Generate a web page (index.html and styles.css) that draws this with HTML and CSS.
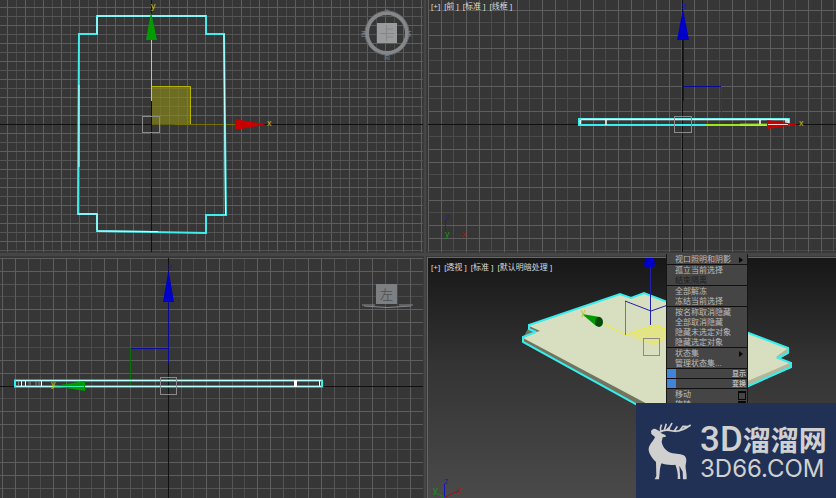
FILE: index.html
```html
<!DOCTYPE html>
<html lang="zh-CN">
<head>
<meta charset="utf-8">
<title>3D 视口</title>
<link rel="stylesheet" href="styles.css">
</head>
<body>
<main class="workspace">
  <section class="viewport" aria-label="顶视图">
    <svg class="scene" viewBox="0 0 423 252" preserveAspectRatio="xMinYMin slice">
      <defs>
        <pattern id="gridTop" x="7" y="7" width="18" height="18" patternUnits="userSpaceOnUse">
          <path class="line-dim" d="M9 0h1v18h-1z"/>
          <path class="line" d="M0 0h1v18h-1zM0 0h18v1h-18z"/>
          <path class="line-mid" d="M0 9h18v1h-18z"/>
        </pattern>
      </defs>
      <rect width="423" height="252" fill="url(#gridTop)"/>
      <path class="axis" d="M0 124.500H423M151.500 0V252"/>
      <rect x="152" y="86" width="39" height="39" fill="#8b8b1a" fill-opacity=".65"/>
      <path d="M152 86.500H190.500V124" fill="none" stroke="#b9b400"/>
      <path d="M175 124.500H236" stroke="#767000"/>
      <path d="M151.500 40V101" stroke="#d8d21c"/>
      <path class="outline" d="M97 16H206V34H224L226 215H206V233L97 231V214H78L79 34H97Z"/>
      <path class="outline-core" d="M97 16H206M97 34V17M79 85V167M224 34L225.500 215M97 231L158 231.500M78 214H97V230"/>
      <path fill="#009c00" d="M151 12L157 40H146Z"/>
      <path fill="#c80000" d="M235 119L266 124.500L235 130Z"/>
      <rect class="pivot" x="142.500" y="116.500" width="17" height="16"/>
      <text class="tick" x="151" y="9" fill="#c5c01a">y</text>
      <text class="tick" x="267" y="126" fill="#c5c01a">x</text>
      <circle cx="387" cy="33" r="20" fill="none" stroke="#85888b" stroke-width="4"/>
      <circle cx="387" cy="33" r="22" fill="none" stroke="#686a6c"/>
      <rect x="377" y="23" width="20" height="20" fill="#999b9d"/>
      <path d="M380 33.500H394M386.500 25V41M387 29h6M387 37h6" stroke="#85878a" fill="none"/>
      <g class="compass"><text x="384" y="14">北</text><text x="384" y="59">南</text><text x="361" y="36">西</text><text x="406" y="36">东</text></g>
    </svg>
  </section>

  <section class="viewport" aria-label="前视图">
    <svg class="scene" viewBox="427 0 409 252" preserveAspectRatio="xMinYMin slice">
      <defs>
        <pattern id="gridFront" x="441" y="10" width="38" height="38" patternUnits="userSpaceOnUse">
          <path class="line-dim" d="M12 0h1v38h-1zM0 12h38v1h-38z"/>
          <path class="line" d="M0 0h1v38h-1zM25 0h1v38h-1zM0 0h38v1h-38zM0 25h38v1h-38z"/>
        </pattern>
      </defs>
      <rect x="428" width="408" height="252" fill="url(#gridFront)"/>
      <path class="axis" d="M428 124.500H836M682.500 0V252"/>
      <path d="M683.500 38V101M683 86.500H721" stroke="#0a0a9a" fill="none"/>
      <path d="M721.500 87V124" stroke="#a01010"/>
      <rect x="579" y="119" width="210" height="6" fill="none" stroke="#38eef2" stroke-width="2"/>
      <path d="M581 119.500H788M580.500 120V124M606 119V125M760 119V125M786 120v3M740 124.500H788V119" stroke="#fff" fill="none" stroke-width="1.500"/>
      <path d="M706 124.500H768" stroke="#9ee81e"/>
      <path fill="#c80000" d="M767 120L798 124.500L767 129Z"/>
      <path d="M768 124.500H788" stroke="#ffd0d0"/>
      <path fill="#0000c8" d="M683 9L689 40H677Z"/>
      <rect class="pivot" x="674.500" y="116.500" width="17" height="16"/>
      <text class="tick" x="682" y="9" fill="#1c1cc0">z</text>
      <text class="tick" x="799" y="126" fill="#c5c01a">x</text>
      <path d="M445.500 220V235" stroke="#1c1cb5"/><path d="M448 235.500H463" stroke="#9a1010"/>
      <text class="tick" x="445" y="220" fill="#1c1cc0">z</text>
      <text class="tick" x="445" y="237" fill="#159a15">y</text>
      <text class="tick" x="462" y="237" fill="#aa1515">x</text>
    </svg>
    <div class="labels">
      <button type="button">[+]</button><button type="button">[前 ]</button><button type="button">[标准 ]</button><button type="button">[线框 ]</button>
    </div>
  </section>

  <section class="viewport" aria-label="左视图">
    <svg class="scene" viewBox="0 257 423 241" preserveAspectRatio="xMinYMin slice">
      <defs>
        <pattern id="gridLeft" x="15" y="284" width="51" height="51" patternUnits="userSpaceOnUse">
          <path class="line-dim" d="M25 0h1v51h-1zM0 12h51v1h-51z"/>
          <path class="line-mid" d="M13 0h1v51h-1zM0 0h51v1h-51z"/>
          <path class="line" d="M0 0h1v51h-1zM38 0h1v51h-1zM0 25h51v1h-51zM0 38h51v1h-51z"/>
        </pattern>
      </defs>
      <rect y="258" width="423" height="240" fill="url(#gridLeft)"/>
      <path class="axis" d="M0 386.500H423M168.500 258V498"/>
      <path d="M130 348.500H168.500M168.500 300V363" stroke="#0a0a9a" fill="none"/>
      <path d="M130.500 348V385" stroke="#087008"/>
      <rect x="15" y="380.500" width="307" height="6" fill="none" stroke="#38eef2" stroke-width="2"/>
      <path d="M16 380.500H321M16 386.500H321" stroke="#b8ffff"/>
      <path d="M21.500 381v5M25.500 381v5M41.500 381v5M319.500 381v5" stroke="#fff"/>
      <path d="M18.500 381v5M30 381v5M36 381v5M39 381v5" stroke="#888"/>
      <path d="M295.500 380v7" stroke="#fff" stroke-width="3"/>
      <path fill="#009c00" d="M54 386L85 381V391Z"/>
      <path d="M53 386.500H84" stroke="#38eeb0"/>
      <path fill="#0000c8" d="M168.500 270L174 302H163Z"/>
      <rect class="pivot" x="160.500" y="377.500" width="16" height="17"/>
      <text class="tick" x="168" y="270" fill="#1c1cc0">z</text>
      <text class="tick" x="51" y="387" fill="#c5c01a">y</text>
      <rect x="376" y="284" width="21" height="20" fill="#7d8082"/>
      <text class="cube-face" x="380" y="299">左</text>
      <path d="M362 305H375M399 305H413M364 306Q387 309 411 306" fill="none" stroke="#85888b"/>
    </svg>
  </section>

  <section class="viewport viewport-active" aria-label="透视图">
    <svg class="scene" viewBox="428 258 408 240" preserveAspectRatio="xMinYMin slice">
      <path fill="#72745f" d="M530 325L523 338V343L668 422L791 367V362L660 400Z"/>
      <path fill="#b4b69c" d="M668 422L791 368V362L668 413Z"/>
      <path fill="#d8dec0" d="M529 325L620 294L631 298L644 293L788 348V353L777 358L790 363L668 415L523 338L536 332L529 329Z"/>
      <path fill="#72745f" d="M529 326L540 331L536 332L529 330Z"/>
      <path fill="#b4b69c" d="M788 348V354L781 358L776 357Z"/>
      <path d="M536 332L529 329V325L620 294L631 298L644 293L788 348V353L778 358L791 363V367L668 422L523 342V337L536 332" fill="none" stroke="#35eeee" stroke-width="2"/>
      <path fill="#e3e487" d="M628 335L654 325L676 333L654 346Z"/>
      <path d="M600 322L626 335L654 325L670 330" stroke="#eeee30" fill="none"/>
      <path d="M625.500 301V335" stroke="#35aa35"/>
      <path d="M650.500 266V325M625 301L651 311L668 305" stroke="#2020a8" fill="none"/>
      <path fill="#0000c8" d="M645 258H654L655 266Q650 269 644 266Z"/>
      <path fill="#009c00" d="M582 314L600 317L600 326L596 326Z"/>
      <ellipse cx="599" cy="322" rx="4" ry="5" fill="#044d08"/>
      <rect class="pivot" x="643.500" y="338.500" width="16" height="17"/>
      <text class="tick" x="581" y="315" fill="#c5c01a">y</text>
      <path d="M444.500 484V497" stroke="#1515b5"/><path d="M436 493L444 497" stroke="#158a15"/><path d="M445 497L458 491" stroke="#951515"/>
      <text class="tick" x="444" y="484" fill="#1c1cc0">z</text>
      <text class="tick" x="433" y="493" fill="#159a15">y</text>
      <text class="tick" x="457" y="493" fill="#aa1515">x</text>
    </svg>
    <div class="labels">
      <button type="button">[+]</button><button type="button">[透视 ]</button><button type="button">[标准 ]</button><button type="button">[默认明暗处理 ]</button>
    </div>
  </section>

  <div class="menu" role="menu">
    <button class="submenu" type="button" role="menuitem">视口照明和阴影</button>
    <hr>
    <button type="button" role="menuitem">孤立当前选择</button>
    <button type="button" role="menuitem" disabled>结束隔离</button>
    <hr>
    <button type="button" role="menuitem">全部解冻</button>
    <button type="button" role="menuitem">冻结当前选择</button>
    <hr>
    <button type="button" role="menuitem">按名称取消隐藏</button>
    <button type="button" role="menuitem">全部取消隐藏</button>
    <button type="button" role="menuitem">隐藏未选定对象</button>
    <button type="button" role="menuitem">隐藏选定对象</button>
    <hr>
    <button class="submenu" type="button" role="menuitem">状态集</button>
    <button type="button" role="menuitem">管理状态集...</button>
    <hr>
    <div class="menu-title">显示</div>
    <hr>
    <div class="menu-title">变换</div>
    <hr>
    <button class="settings" type="button" role="menuitem">移动</button>
    <button class="settings" type="button" role="menuitem">旋转</button>
  </div>

  <aside class="brand">
    <svg class="deer" viewBox="36 78 132 176" aria-hidden="true">
      <path fill="#d0d0d0" d="M45 106L51 100L57 99L70 106L76 113L88 118L90 123L80 125L77 138C79 153 90 165 104 171C120 176 138 172 147 182C153 190 151 199 149 207C147 217 153 229 152 251H141L140 228L130 210L133 250H125C127 235 123 220 118 207C105 210 87 207 77 203C70 215 72 235 69 251H56L61 241L60 199C48 187 37 172 38 159C40 145 53 136 57 124L46 115Z"/>
      <path fill="none" stroke="#d0d0d0" stroke-width="5" d="M72 109C84 101 96 102 110 106C130 109 146 101 164 88M74 105C71 96 75 92 77 87M85 103L91 84M99 103C98 96 105 89 108 82M115 106L124 92M119 107L132 105M130 106L141 92L158 93M90 104L103 93"/>
    </svg>
    <div class="brand-text">
      <div class="brand-name"><span class="brand-latin">3D</span>溜溜网</div>
      <div class="brand-domain">3D66.COM</div>
    </div>
  </aside>
</main>
</body>
</html>
```
FILE: styles.css
```css
* {
  box-sizing: border-box;
}

body {
  margin: 0;
  font-family: "Liberation Sans", "Noto Sans CJK SC", sans-serif;
  font-size: 8px;
  background: #464646;
}

button {
  margin: 0;
  padding: 0;
  border: 0;
  background: none;
  color: inherit;
  font: inherit;
  text-align: left;
  white-space: nowrap;
}

.workspace {
  position: relative;
  display: grid;
  grid-template-columns: 423fr 409fr;
  grid-template-rows: 252fr 241fr;
  gap: 5px 4px;
  height: 100vh;
  overflow: hidden;
}

.viewport {
  position: relative;
  min-width: 0;
  min-height: 0;
  overflow: hidden;
  background: #363636;
  box-shadow: 0 0 0 1px #3a3a3a;
}

.viewport-active {
  border-top: 1px solid #80691e;
  border-left: 1px solid #80691e;
  background: linear-gradient(#171717, #343434 45%, #4a4a4a);
}

.scene {
  display: block;
  width: 100%;
  height: 100%;
}

.line {
  fill: #5e5e5e;
}

.line-mid {
  fill: #545454;
}

.line-dim {
  fill: #4a4a4a;
}

.axis {
  stroke: #101010;
}

.outline {
  fill: none;
  stroke: #45eaec;
  stroke-width: 2;
}

.outline-core {
  fill: none;
  stroke: #c5ffff;
}

.pivot {
  fill: none;
  stroke: #8b8b8b;
}

.tick {
  font-size: 9px;
}

.compass {
  fill: #85888b;
  font-size: 6px;
}

.cube-face {
  fill: #54585a;
  font-size: 13px;
}

.labels {
  position: absolute;
  top: 0;
  left: 4px;
  display: flex;
  gap: 4px;
  color: #dcdcdc;
  line-height: 14px;
}

.viewport-active .labels {
  top: 3px;
  left: 3px;
}

.menu {
  position: absolute;
  top: 254px;
  right: 88px;
  display: flex;
  flex-direction: column;
  width: 82px;
  border: solid #161616;
  border-width: 0 1px;
  background: #454545;
  color: #bcbcbc;
  line-height: 12px;
}

.menu button {
  position: relative;
  height: 10px;
  padding-left: 8px;
  line-height: 12px;
}

.menu button:disabled {
  color: #202020;
}

.menu hr {
  width: 100%;
  height: 1px;
  margin: 0;
  border: 0;
  background: #101010;
}

.submenu::after {
  content: "";
  position: absolute;
  top: 3px;
  right: 4px;
  border: solid transparent;
  border-width: 3px 0 3px 4px;
  border-left-color: #080808;
}

.settings::after {
  content: "";
  position: absolute;
  top: 2px;
  right: 1px;
  width: 6px;
  height: 6px;
  border: 1px solid #080808;
  border-top-width: 2px;
}

.menu-title {
  height: 9px;
  padding-right: 1px;
  border-left: 9px solid #4285d8;
  font-size: 7px;
  font-weight: bold;
  line-height: 9px;
  text-align: right;
}

.brand {
  position: absolute;
  right: 0;
  bottom: 0;
  display: flex;
  gap: 8px;
  width: 200px;
  height: 95px;
  padding: 18px 8px 0 12px;
  background: #213055;
  color: #d0d0d0;
}

.deer {
  flex: none;
  width: 44px;
  height: 60px;
}

.brand-text {
  white-space: nowrap;
}

.brand-name {
  height: 36px;
  font-family: "Noto Sans CJK SC", sans-serif;
  font-size: 28px;
  font-weight: 700;
  line-height: 36px;
}

.brand-latin {
  font-family: Roboto, sans-serif;
  font-size: 35px;
  font-weight: 500;
}

.brand-domain {
  font-family: Inter, sans-serif;
  font-size: 24px;
  line-height: 24px;
}
```
